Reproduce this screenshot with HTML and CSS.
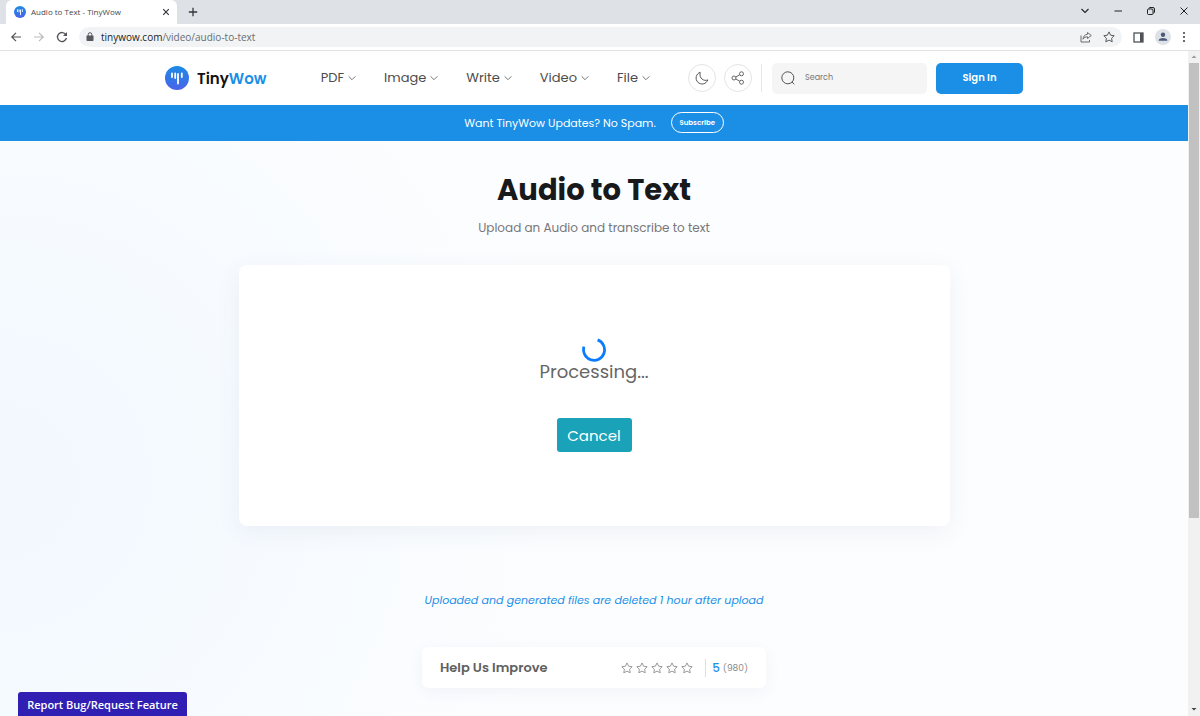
FILE: index.html
```html
<!DOCTYPE html>
<html lang="en">
<head>
<meta charset="utf-8">
<meta name="viewport" content="width=device-width, initial-scale=1">
<title>Audio to Text - TinyWow</title>
<link rel="stylesheet" href="styles.css">
</head>
<body>
<svg class="defs" aria-hidden="true">
  <defs>
    <linearGradient id="brand" x1="0" y1="0" x2="0" y2="1"><stop offset="0" stop-color="#1b8be6"/><stop offset="1" stop-color="#4a63ea"/></linearGradient>
    <symbol id="logo" viewBox="0 0 24 24"><circle cx="12" cy="12" r="12" fill="url(#brand)"/><path d="M7 7.500v3.500M10.200 7.500v4.500M13 8v9.500M16.800 7.500v3.500" fill="none" stroke="#fff" stroke-width="1.800" stroke-linecap="round"/></symbol>
    <symbol id="chevron" viewBox="0 0 8 8"><path d="M.6 2.3 4 5.7l3.4-3.4" fill="none" stroke="currentColor"/></symbol>
    <symbol id="star" viewBox="0 0 12 12"><path d="m6 .9 1.600 3.300 3.600.5-2.600 2.500.6 3.600L6 9.100l-3.200 1.700.6-3.600L.8 4.700l3.600-.5z" fill="none" stroke="currentColor" stroke-linejoin="round"/></symbol>
  </defs>
</svg>

<div class="browser-tabs">
  <div class="tab">
    <svg class="tab-logo"><use href="#logo"/></svg>
    <span class="tab-title">Audio to Text - TinyWow</span>
    <button class="icon-btn" aria-label="Close tab"><svg width="8" height="8" viewBox="0 0 8 8"><path d="m1.2 1.2 5.6 5.6m0-5.6L1.2 6.8" stroke="#35383c" stroke-width="1.2"/></svg></button>
  </div>
  <button class="icon-btn new-tab" aria-label="New tab"><svg width="10" height="10" viewBox="0 0 10 10"><path d="M5 .8v8.4M.8 5h8.4" stroke="#35383c" stroke-width="1.3"/></svg></button>
  <div class="window-controls">
    <button class="icon-btn" aria-label="Search tabs"><svg width="10" height="10" viewBox="0 0 10 10" fill="none"><path d="m1.5 3 3.5 3.5L8.500 3" stroke="#222" stroke-width="1.1"/></svg></button>
    <button class="icon-btn" aria-label="Minimize"><svg width="10" height="10" viewBox="0 0 10 10"><path d="M1.500 5h7.500" stroke="#222"/></svg></button>
    <button class="icon-btn" aria-label="Restore"><svg width="10" height="10" viewBox="0 0 10 10" fill="none" stroke="#222"><rect x="1.500" y="3" width="5.500" height="5.500" rx="1"/><path d="M3 2.800V2.500q0-1 1-1h3q1.500 0 1.500 1.500v3q0 1-1 1"/></svg></button>
    <button class="icon-btn" aria-label="Close"><svg width="10" height="10" viewBox="0 0 10 10"><path d="m1.500 1.500 7 7m0-7-7 7" stroke="#222"/></svg></button>
  </div>
</div>

<div class="browser-bar">
  <button class="icon-btn" aria-label="Back"><svg width="12" height="12" viewBox="0 0 12 12" fill="none" stroke="#4f5357" stroke-width="1.200"><path d="M11 6H1.800M6 1.800 1.800 6 6 10.200"/></svg></button>
  <button class="icon-btn" aria-label="Forward"><svg width="12" height="12" viewBox="0 0 12 12" fill="none" stroke="#b9bbbe" stroke-width="1.200"><path d="M1 6h9.200M6 1.800 10.200 6 6 10.200"/></svg></button>
  <button class="icon-btn" aria-label="Reload"><svg width="12" height="12" viewBox="0 0 12 12" fill="none"><path d="M9.800 3.600A4.500 4.500 0 1 0 10.400 7" stroke="#4f5357" stroke-width="1.300"/><path d="M11 1v4H7z" fill="#4f5357"/></svg></button>
  <div class="address">
    <svg width="8" height="10" viewBox="0 0 8 10"><rect x=".5" y="3.500" width="7" height="5.500" rx=".8" fill="#55595d"/><path d="M2.200 4V2.500a1.800 1.800 0 0 1 3.600 0V4" fill="none" stroke="#55595d"/></svg>
    <span class="url"><b>tinywow.com</b>/video/audio-to-text</span>
    <button class="icon-btn" aria-label="Share page"><svg width="12" height="12" viewBox="0 0 12 12" fill="none" stroke="#686c70"><path d="M1 4.500V11h8.500V9"/><path d="M7.500 1.500 11.300 4.500 7.500 7.500V5.800C5.500 5.800 4 6.600 3 8.200c.2-2.600 1.700-4.600 4.500-5z" stroke-linejoin="round"/></svg></button>
    <button class="icon-btn" aria-label="Bookmark"><svg width="12" height="12" class="bookmark"><use href="#star"/></svg></button>
  </div>
  <button class="icon-btn" aria-label="Side panel"><svg width="11" height="11" viewBox="0 0 11 11"><rect x="1" y="1" width="9" height="9" fill="none" stroke="#4f5357" stroke-width="1.300"/><path d="M7 1h3v9H7z" fill="#4f5357"/></svg></button>
  <button class="icon-btn" aria-label="Profile"><svg width="16" height="16" viewBox="0 0 16 16"><circle cx="8" cy="8" r="8" fill="#dee1e6"/><circle cx="8" cy="5.700" r="2.200" fill="#4b5878"/><path d="M3.700 11.800V11c0-1.400 2.900-2.100 4.300-2.100s4.300.7 4.300 2.100v.8z" fill="#4b5878"/></svg></button>
  <button class="icon-btn" aria-label="Menu"><svg width="4" height="12" viewBox="0 0 4 12" fill="#45484c"><circle cx="2" cy="2" r="1.100"/><circle cx="2" cy="6" r="1.100"/><circle cx="2" cy="10" r="1.100"/></svg></button>
</div>

<div class="viewport">
  <div class="page">
    <header class="site-header">
      <div class="header-inner">
        <a class="brand" href="#"><svg class="brand-logo"><use href="#logo"/></svg><span>Tiny<span class="wow">Wow</span></span></a>
        <nav class="nav">
          <a href="#">PDF<svg><use href="#chevron"/></svg></a>
          <a href="#">Image<svg><use href="#chevron"/></svg></a>
          <a href="#">Write<svg><use href="#chevron"/></svg></a>
          <a href="#">Video<svg><use href="#chevron"/></svg></a>
          <a href="#">File<svg><use href="#chevron"/></svg></a>
        </nav>
        <div class="tools">
          <button class="round" aria-label="Dark mode"><svg width="14" height="14" viewBox="0 0 14 14" fill="none" stroke="#555"><path d="M5.200 1.300a6 6 0 1 0 7.600 7.600C9 10.600 3.800 7.500 5.200 1.300z" stroke-linejoin="round"/></svg></button>
          <button class="round" aria-label="Share"><svg width="14" height="14" viewBox="0 0 14 14" fill="none" stroke="#666"><circle cx="3" cy="7" r="2"/><circle cx="10.500" cy="2.800" r="2"/><circle cx="10.500" cy="11.200" r="2"/><path d="m4.800 6 3.900-2.200M4.800 8l3.900 2.200"/></svg></button>
        </div>
        <label class="search">
          <svg width="14" height="14" viewBox="0 0 14 14" fill="none" stroke="#555"><circle cx="6.800" cy="6.800" r="6"/><path d="m11 11 2.300 2.300"/></svg>
          <input type="search" placeholder="Search" aria-label="Search">
        </label>
        <button class="sign-in">Sign In</button>
      </div>
    </header>

    <div class="banner">
      <span>Want TinyWow Updates? No Spam.</span>
      <button class="subscribe">Subscribe</button>
    </div>

    <main class="main">
      <h1>Audio to Text</h1>
      <p class="subtitle">Upload an Audio and transcribe to text</p>
      <section class="card">
        <svg class="spinner" viewBox="0 0 24 24" aria-hidden="true"><path d="M15.600 1.900A10.500 10.500 0 1 1 2 8.700" fill="none" stroke="#0a7cff" stroke-width="2.800"/></svg>
        <p class="status" role="status">Processing...</p>
        <button class="cancel">Cancel</button>
      </section>
      <p class="notice">Uploaded and generated files are deleted 1 hour after upload</p>
      <section class="rating">
        <h2>Help Us Improve</h2>
        <div class="stars">
          <button aria-label="1 star"><svg><use href="#star"/></svg></button>
          <button aria-label="2 stars"><svg><use href="#star"/></svg></button>
          <button aria-label="3 stars"><svg><use href="#star"/></svg></button>
          <button aria-label="4 stars"><svg><use href="#star"/></svg></button>
          <button aria-label="5 stars"><svg><use href="#star"/></svg></button>
        </div>
        <div class="score"><strong>5</strong><span>(980)</span></div>
      </section>
    </main>
  </div>
  <div class="scrollbar" aria-hidden="true">
    <svg width="12" height="12" viewBox="0 0 12 12"><path d="M3.500 7 6 4.500 8.500 7z" fill="#9a9a9a"/></svg>
    <div class="track"><div class="thumb"></div></div>
    <svg width="12" height="12" viewBox="0 0 12 12"><path d="M3.500 4 6 6.500 8.500 4z" fill="#444"/></svg>
  </div>
  <button class="report">Report Bug/Request Feature</button>
</div>
</body>
</html>
```

FILE: styles.css
```css
* { box-sizing: border-box; }

body {
  margin: 0;
  height: 100vh;
  overflow: hidden;
  display: flex;
  flex-direction: column;
  font-family: Poppins, Inter, sans-serif;
  color: #4c4c4c;
  background: #fff;
}

h1, h2, p { margin: 0; }
a { color: inherit; text-decoration: none; }
button { font: inherit; color: inherit; border: 0; background: none; padding: 0; cursor: pointer; }
svg { display: block; flex: none; }
.defs { position: absolute; width: 0; height: 0; }
.icon-btn { display: flex; align-items: center; justify-content: center; flex: none; }

/* Browser frame */
.browser-tabs {
  display: flex;
  align-items: center;
  flex: none;
  height: 24px;
  padding-left: 6px;
  background: #dee1e6;
  font-family: "Open Sans", sans-serif;
}
.tab {
  display: flex;
  align-items: center;
  align-self: stretch;
  gap: 5px;
  width: 171px;
  padding: 0 7px 0 8px;
  background: #fff;
  border-radius: 6px 6px 0 0;
}
.tab-logo { width: 12px; height: 12px; }
.tab-title { flex: 1; font-size: 8px; line-height: 12px; white-space: nowrap; color: #45484c; }
.new-tab { margin-left: 11px; }
.window-controls { display: flex; gap: 23px; margin-left: auto; padding: 0 11px 2px 0; }
.browser-bar {
  display: flex;
  align-items: center;
  flex: none;
  gap: 11px;
  height: 27px;
  padding: 0 14px 0 10px;
  border-bottom: 1px solid #dfe1e3;
  font-family: "Open Sans", sans-serif;
}
.address {
  display: flex;
  align-items: center;
  flex: 1;
  gap: 7px;
  height: 20px;
  padding: 0 7px;
  border-radius: 10px;
  background: #f1f3f4;
}
.address .icon-btn { margin-left: 4px; }
.url { flex: 1; font-size: 10px; line-height: 14px; color: #696d71; }
.url b { font-weight: 400; color: #222529; }
.bookmark { color: #55595d; }

/* Page */
.viewport { position: relative; display: flex; flex: 1; min-height: 0; }
.page {
  flex: 1;
  min-width: 0;
  overflow: hidden;
  background: radial-gradient(circle at 0 65%, #f3f8ff 0, #f5faff 18%, #f9fcff 30%, #fcfdff 45%);
}
.site-header { background: #fff; }
.header-inner {
  display: flex;
  align-items: center;
  height: 54px;
  max-width: 858px;
  margin: 0 auto;
}
.brand { display: flex; align-items: center; gap: 8px; font-size: 15px; font-weight: 600; color: #111; }
.brand-logo { width: 24px; height: 24px; }
.wow { color: #1b8fe6; }
.nav { display: flex; gap: 28px; margin: 0 38px 0 auto; font-size: 13px; line-height: 20px; }
.nav a { display: flex; align-items: center; gap: 4px; }
.nav svg { width: 8px; height: 8px; color: #777; }
.tools { display: flex; gap: 8px; padding-right: 9px; border-right: 1px solid #e6e6e6; }
.round {
  display: flex;
  align-items: center;
  justify-content: center;
  width: 28px;
  height: 28px;
  border: 1px solid #e4e4e4;
  border-radius: 50%;
}
.search {
  display: flex;
  align-items: center;
  gap: 10px;
  width: 155px;
  height: 31px;
  margin: 0 9px 0 10px;
  padding: 0 9px;
  border-radius: 5px;
  background: #f5f5f5;
}
.search input { flex: 1; min-width: 0; padding: 0; border: 0; outline: 0; background: none; font: inherit; font-size: 8px; }
.search input::placeholder { color: #777; opacity: 1; }
.sign-in {
  width: 87px;
  height: 31px;
  border-radius: 5px;
  background: #1b8fe6;
  color: #fff;
  font-size: 10px;
  font-weight: 600;
}
.banner {
  display: flex;
  align-items: center;
  justify-content: center;
  gap: 15px;
  height: 36px;
  padding-bottom: 1px;
  background: #1b8fe6;
  color: #fff;
  font-size: 11px;
  line-height: 18px;
}
.subscribe { width: 53px; height: 21px; border: 1px solid #fff; border-radius: 11px; font-size: 7px; line-height: 10px; font-weight: 600; }

.main { display: flex; flex-direction: column; align-items: center; padding: 28px 20px 0; }
h1 { font-size: 29px; line-height: 42px; font-weight: 700; color: #17191b; }
.subtitle { margin-top: 8px; font-size: 12px; line-height: 18px; color: #777; }
.card {
  display: flex;
  flex-direction: column;
  align-items: center;
  width: 100%;
  max-width: 711px;
  margin-top: 28px;
  padding: 73px 20px 74px;
  border-radius: 8px;
  background: #fff;
  box-shadow: 0 6px 24px rgba(60, 80, 120, .07);
}
.spinner { width: 24px; height: 24px; }
.status { font-size: 18px; line-height: 20px; color: #666; }
.cancel {
  width: 75px;
  height: 34px;
  margin-top: 36px;
  border-radius: 3px;
  background: #19a2b8;
  color: #fff;
  font-size: 15px;
}
.notice { margin-top: 65px; font-size: 11px; line-height: 18px; font-style: italic; color: #1b8fe6; }
.rating {
  display: flex;
  align-items: center;
  width: 344px;
  height: 41px;
  margin-top: 38px;
  padding: 0 18px;
  border-radius: 6px;
  background: #fff;
  box-shadow: 0 4px 16px rgba(60, 80, 120, .06);
}
.rating h2 { flex: 1; font-size: 13px; font-weight: 600; color: #606060; }
.stars { display: flex; gap: 3px; color: #999; }
.stars svg { width: 12px; height: 12px; }
.score {
  display: flex;
  align-items: center;
  gap: 3px;
  margin-left: 12px;
  padding-left: 6px;
  border-left: 1px solid #e0e0e0;
  font-size: 9px;
  line-height: 18px;
  color: #888;
}
.score strong { font-size: 12px; font-weight: 500; color: #1b8fe6; }

.scrollbar { display: flex; flex-direction: column; flex: none; width: 12px; background: #f1f1f1; }
.track { flex: 1; }
.thumb { height: 71%; margin: 0 1px; background: #c1c1c1; }
.report {
  position: absolute;
  left: 18px;
  bottom: 0;
  width: 169px;
  height: 24px;
  border-radius: 3px 3px 0 0;
  background: #311fb3;
  color: #fff;
  font-family: "Open Sans", sans-serif;
  font-size: 11px;
  font-weight: 600;
}
```
